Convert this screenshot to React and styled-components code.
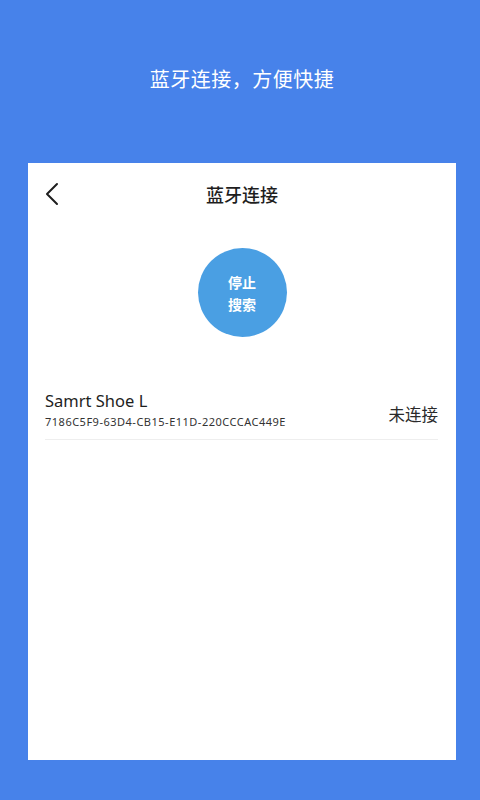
import styled, { createGlobalStyle } from "styled-components";

const GlobalStyle = createGlobalStyle`
  html, body {
    margin: 0;
    padding: 0;
    background: #4782ea;
  }
  body {
    font-family: "Noto Sans", "Noto Sans CJK SC", sans-serif;
  }
`;

const Page = styled.div`
  width: 480px;
  height: 800px;
  background: #4782ea;
  display: flex;
  flex-direction: column;
  align-items: center;
  box-sizing: border-box;
  padding: 63px 0 0 4px;
`;

const Slogan = styled.h1`
  margin: 0;
  height: 32px;
  line-height: 32px;
  color: #ffffff;
  font-size: 20px;
  font-weight: 400;
  letter-spacing: 0.5px;
  font-family: "Noto Sans CJK SC", sans-serif;
`;

const Card = styled.section`
  margin-top: 68px;
  width: 428px;
  height: 597px;
  background: #ffffff;
  display: flex;
  flex-direction: column;
  align-items: center;
  box-sizing: border-box;
`;

const NavBar = styled.header`
  position: relative;
  width: 100%;
  height: 62px;
  display: flex;
  align-items: center;
  justify-content: center;
`;

const BackButton = styled.button`
  position: absolute;
  left: 10px;
  top: 16px;
  width: 28px;
  height: 30px;
  padding: 0;
  border: none;
  background: none;
  display: flex;
  align-items: center;
  justify-content: center;
`;

const Title = styled.h2`
  margin: 0;
  font-size: 18px;
  font-weight: 500;
  color: #1e1e1e;
  font-family: "Noto Sans CJK SC", sans-serif;
`;

const SearchButton = styled.button`
  margin-top: 23px;
  width: 89px;
  height: 89px;
  border-radius: 50%;
  border: none;
  background: #4a9fe3;
  color: #ffffff;
  font-size: 14px;
  font-weight: 700;
  line-height: 22px;
  font-family: "Noto Sans CJK SC", sans-serif;
  display: flex;
  align-items: center;
  justify-content: center;
  padding: 0;
`;

const DeviceList = styled.ul`
  list-style: none;
  margin: 53px 0 0;
  padding: 0 18px 0 17px;
  width: 100%;
  box-sizing: border-box;
`;

const DeviceRow = styled.li`
  display: flex;
  align-items: center;
  justify-content: space-between;
  padding-bottom: 10px;
  border-bottom: 1px solid #eeeeee;
`;

const DeviceInfo = styled.div`
  display: flex;
  flex-direction: column;
`;

const DeviceName = styled.span`
  font-size: 16.5px;
  color: #1e1e1e;
  line-height: 22px;
  font-family: "Noto Sans", sans-serif;
`;

const DeviceId = styled.span`
  margin-top: 2px;
  font-size: 11px;
  color: #333333;
  line-height: 15px;
  letter-spacing: 0.5px;
  font-family: "Noto Sans", sans-serif;
`;

const Status = styled.span`
  margin-top: 8px;
  font-size: 16.5px;
  color: #2a2a2a;
  font-family: "Noto Sans CJK SC", sans-serif;
`;

const devices = [
  { name: "Samrt Shoe L", id: "7186C5F9-63D4-CB15-E11D-220CCCAC449E", status: "未连接" },
];

export default function App() {
  return (
    <>
      <GlobalStyle />
      <Page>
        <Slogan>蓝牙连接，方便快捷</Slogan>
        <Card>
          <NavBar>
            <BackButton aria-label="返回">
              <svg width="14" height="24" viewBox="0 0 14 24" fill="none">
                <path d="M12 2 L2 12 L12 22" stroke="#1e1e1e" strokeWidth="2" strokeLinecap="round" strokeLinejoin="round" />
              </svg>
            </BackButton>
            <Title>蓝牙连接</Title>
          </NavBar>
          <SearchButton>
            停止
            <br />
            搜索
          </SearchButton>
          <DeviceList>
            {devices.map((d) => (
              <DeviceRow key={d.id}>
                <DeviceInfo>
                  <DeviceName>{d.name}</DeviceName>
                  <DeviceId>{d.id}</DeviceId>
                </DeviceInfo>
                <Status>{d.status}</Status>
              </DeviceRow>
            ))}
          </DeviceList>
        </Card>
      </Page>
    </>
  );
}
